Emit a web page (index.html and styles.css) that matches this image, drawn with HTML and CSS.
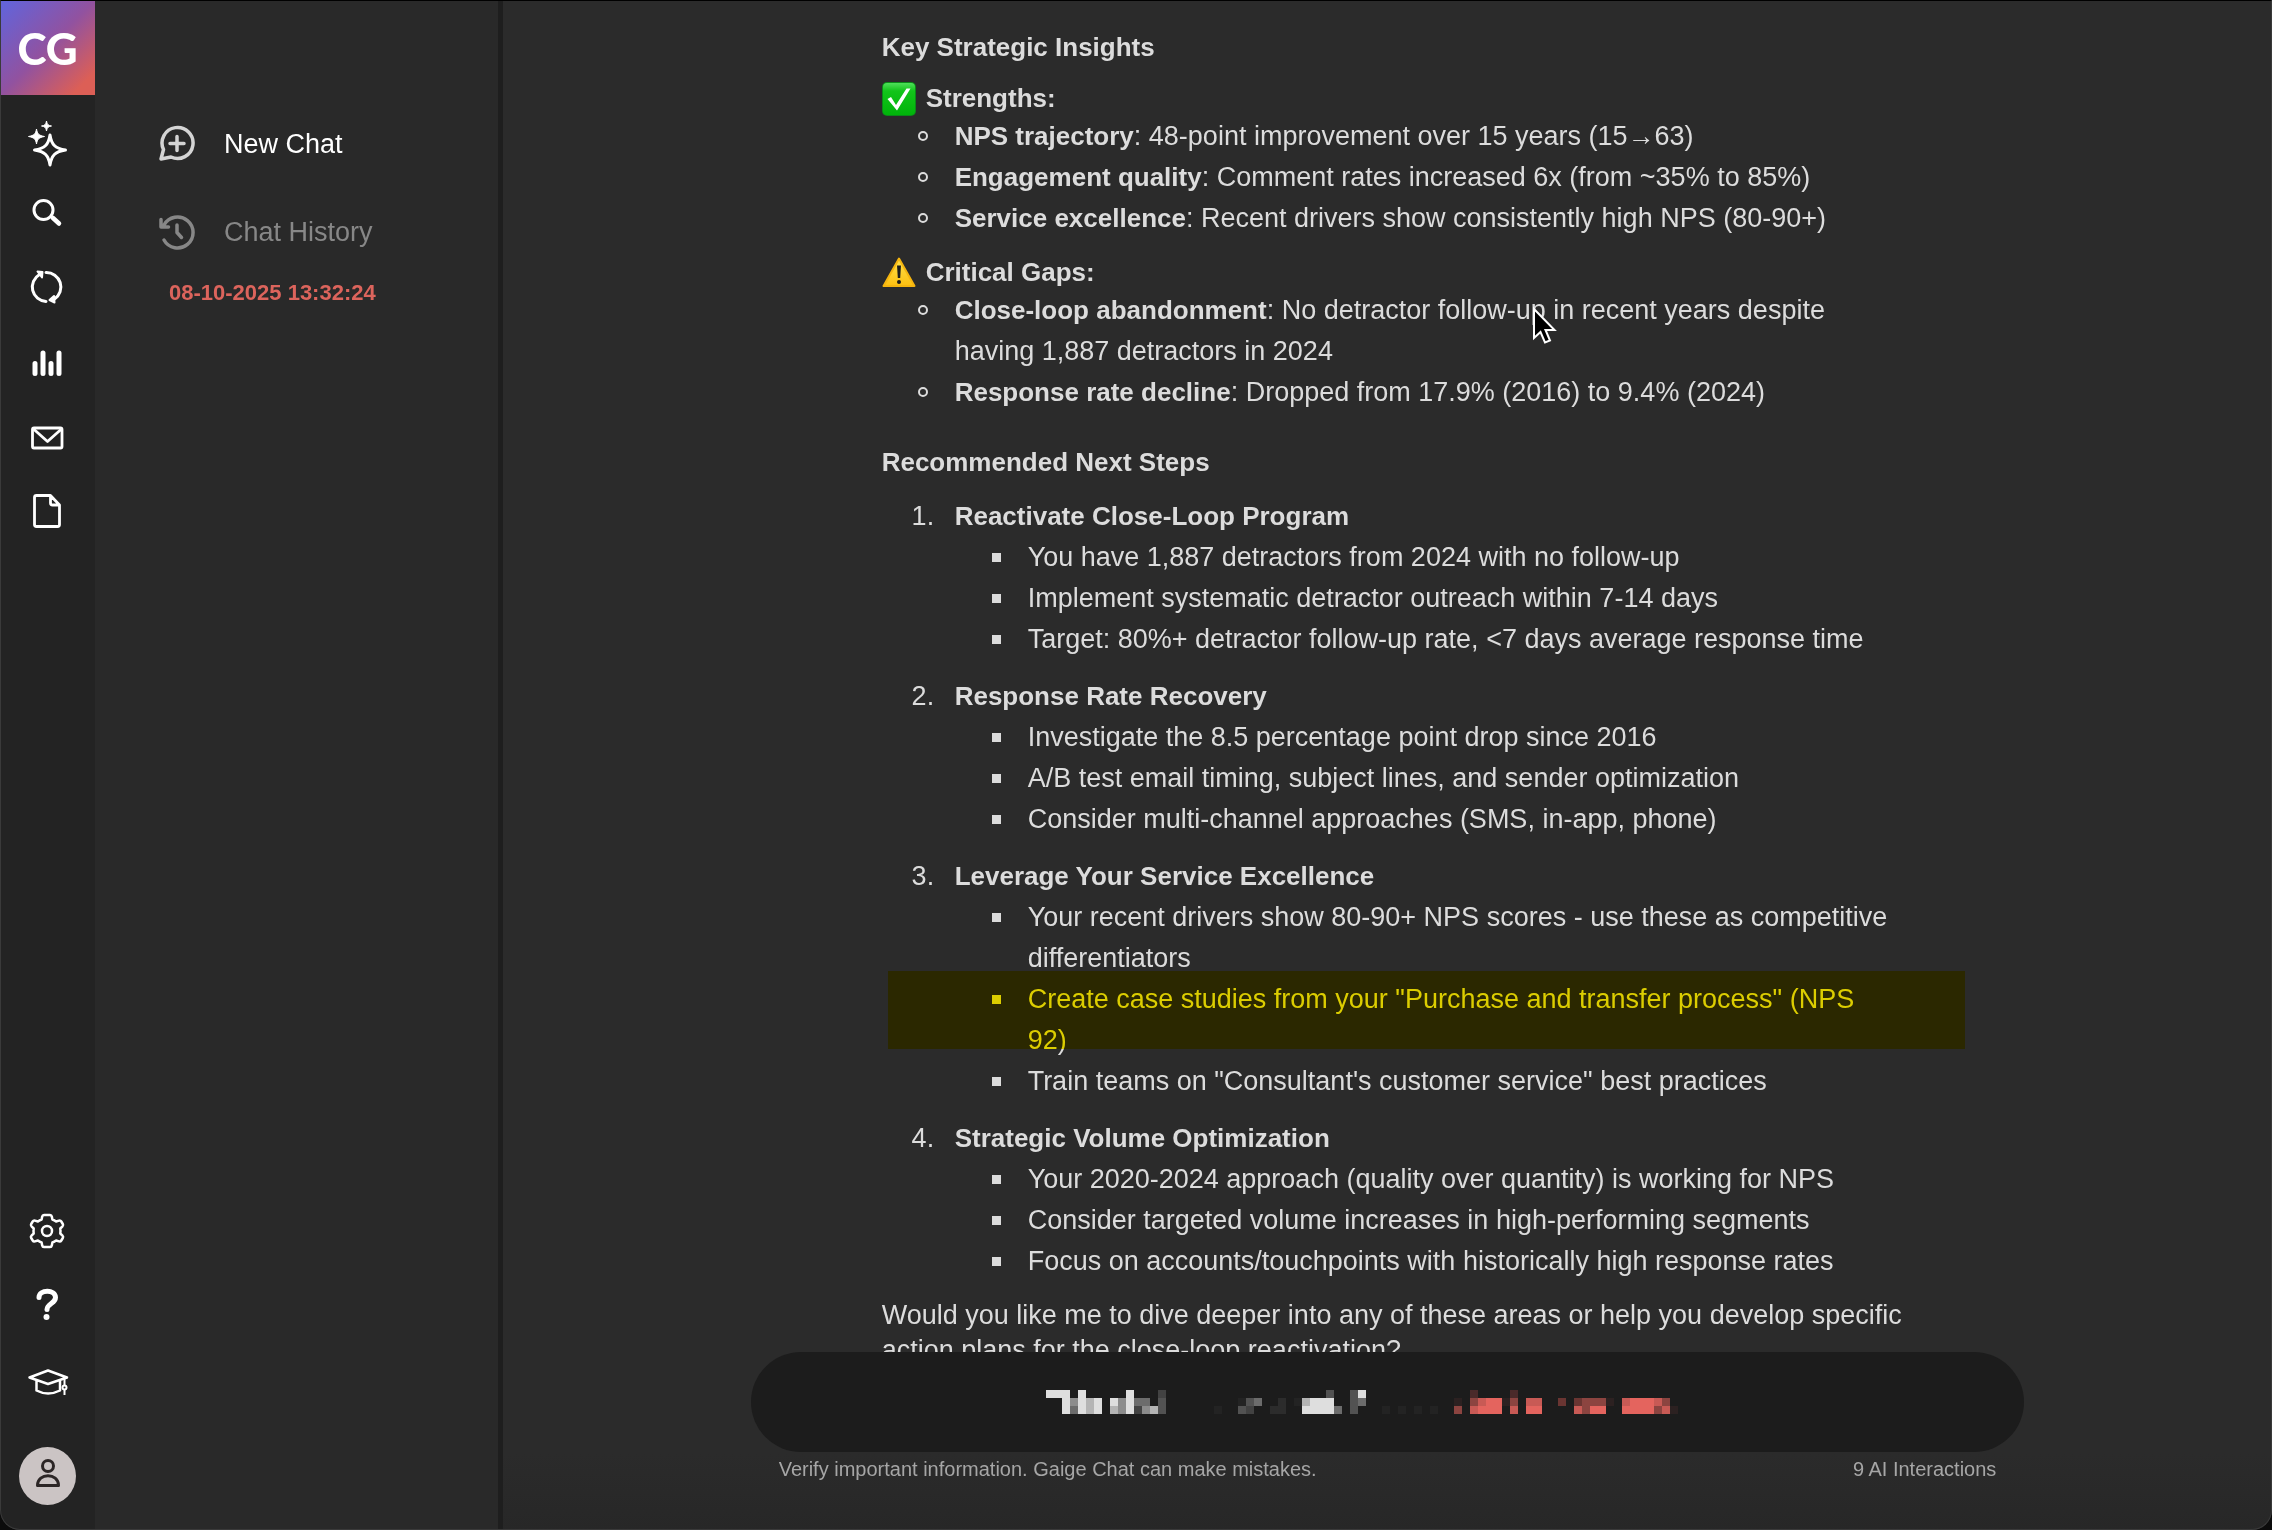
FILE: index.html
```html
<!DOCTYPE html>
<html lang="en">
<head>
  <meta charset="UTF-8" />
  <meta name="viewport" content="width=device-width, initial-scale=1.0" />
  <title>Gaige Chat</title>
  <link rel="stylesheet" href="styles.css">
</head>
<body>
  <div class="app">
    <nav class="rail" aria-label="Main">
      <a class="logo" href="#">CG</a>
      <div class="rail-group">
        <button class="rail-btn" aria-label="AI chat">
          <svg viewBox="0 0 59 60" fill="none" stroke="currentColor" stroke-width="3" stroke-linejoin="round">
            <path d="M32 26c1.500 9.500 5 13.500 15.500 15-10.500 1.500-14 5.500-15.500 15-1.500-9.500-5-13.500-15.500-15 10.500-1.500 14-5.500 15.500-15z"/>
            <path fill="currentColor" stroke-width="1" d="M18.500 20c.8 5 2.500 6.500 8 7.500-5.500 1-7.200 2.500-8 7.500-.8-5-2.500-6.500-8-7.500 5.500-1 7.200-2.500 8-7.500zM28.500 12c.6 3.500 1.500 4.500 5 5-3.500.6-4.400 1.500-5 5-.6-3.500-1.500-4.400-5-5 3.500-.5 4.400-1.500 5-5z"/>
          </svg>
        </button>
        <button class="rail-btn" aria-label="Search">
          <svg viewBox="0 0 59 60" fill="none" stroke="currentColor" stroke-width="3" stroke-linecap="round">
            <circle cx="25.500" cy="27" r="9.500"/>
            <path d="M33 33.500l2 2"/>
            <path stroke-width="4.500" d="M35 35l6 5.500"/>
          </svg>
        </button>
        <button class="rail-btn" aria-label="Refresh">
          <svg viewBox="0 0 59 60" fill="none" stroke="currentColor" stroke-width="3" stroke-linecap="round">
            <path d="M28 15.500a14.500 14.500 0 0 1 8.500 26.500M28 44.500a14.500 14.500 0 0 1-6.500-27"/>
            <path fill="currentColor" stroke-width="2" stroke-linejoin="round" d="M19.500 14.500l5 .5-.5 5.500zM36.500 45.500l-5-2.500 4.500-4z"/>
          </svg>
        </button>
        <button class="rail-btn" aria-label="Reports">
          <svg viewBox="0 0 59 60" fill="none" stroke="currentColor" stroke-width="5" stroke-linecap="round">
            <path d="M17 32.500v10M25 22v20.500M33 32.500v10M41 22v20.500"/>
          </svg>
        </button>
        <button class="rail-btn" aria-label="Messages">
          <svg viewBox="0 0 59 60" fill="none" stroke="currentColor" stroke-width="2.800" stroke-linejoin="round">
            <rect x="14.500" y="23" width="29.500" height="20" rx="1.500"/>
            <path d="M15.500 24L29.500 36.500l14-12.500"/>
          </svg>
        </button>
        <button class="rail-btn" aria-label="Documents">
          <svg viewBox="0 0 59 60" fill="none" stroke="currentColor" stroke-width="2.800" stroke-linejoin="round">
            <path d="M18.500 16.500h14l9 9.500v19.500a2 2 0 0 1-2 2h-21a2 2 0 0 1-2-2v-27a2 2 0 0 1 2-2zM32.500 16.500v7.500a2 2 0 0 0 2 2h7"/>
          </svg>
        </button>
      </div>
      <div class="rail-group rail-bottom">
        <button class="rail-btn" aria-label="Settings">
          <svg viewBox="0 0 59 60" fill="none" stroke="currentColor" stroke-width="2.500" stroke-linejoin="round">
            <path d="M26 14h6q1.500 0 1.800 1.500l.6 3q2 .8 3.700 2l2.900-.9q1.500-.4 2.300.9l1.500 2.500q.8 1.300-.3 2.400l-2.200 2.100q.4 2.500 0 5l2.200 2.100q1.100 1.100.3 2.400l-1.500 2.500q-.8 1.300-2.300.9l-2.900-.9q-1.700 1.300-3.700 2l-.6 3q-.3 1.500-1.800 1.500h-6q-1.500 0-1.800-1.500l-.6-3q-2-.7-3.700-2l-2.900.9q-1.500.4-2.300-.9l-1.500-2.500q-.8-1.300.3-2.400l2.200-2.100q-.4-2.500 0-5l-2.200-2.100q-1.100-1.100-.3-2.400l1.500-2.500q.8-1.300 2.300-.9l2.900.9q1.700-1.200 3.700-2l.6-3q.3-1.500 1.800-1.500z"/>
            <circle cx="29" cy="30" r="5"/>
          </svg>
        </button>
        <button class="rail-btn" aria-label="Help">
          <svg viewBox="0 0 59 60" fill="none" stroke="currentColor" stroke-width="5" stroke-linecap="round">
            <path d="M21 22.500c0-8 16.500-8.500 16.500 0 0 6-8.500 6-8.500 12"/>
            <circle cx="28.500" cy="42" r="3" fill="currentColor" stroke="none"/>
          </svg>
        </button>
        <button class="rail-btn" aria-label="Learning">
          <svg viewBox="0 0 59 60" fill="none" stroke="currentColor" stroke-width="2.500" stroke-linejoin="round">
            <path d="M11.500 28.500l18.500-7 19 7-19 6.500zM18.500 31v10.500q11.500 6 23.500 0V31"/>
            <path stroke-width="2" d="M46.500 30v6.500M46.500 40.500V46"/>
            <circle cx="46.500" cy="38.500" r="2" stroke-width="2"/>
          </svg>
        </button>
      </div>
      <button class="avatar" aria-label="Account">
        <svg viewBox="0 0 28 30" fill="none" stroke="currentColor" stroke-width="3">
          <circle cx="14" cy="8" r="5.500"/>
          <path stroke-linejoin="round" d="M3.500 27.500c0-13 21-13 21 0z"/>
        </svg>
      </button>
    </nav>

    <aside class="panel">
      <button class="panel-item">
        <svg viewBox="0 0 38 38" fill="none" stroke="currentColor" stroke-width="3.500" stroke-linecap="round" stroke-linejoin="round">
          <path d="M3 34l2.500-9.500a15.500 15.500 0 1 1 7.500 7.500zM19 11.500v14M12 18.500h14"/>
        </svg>
        <span>New Chat</span>
      </button>
      <button class="panel-item muted">
        <svg viewBox="0 0 38 38" fill="none" stroke="currentColor" stroke-width="3.500" stroke-linecap="round" stroke-linejoin="round">
          <path d="M6 12a15.500 15.500 0 1 1 0 15M3 6.500v7.500h7.500M19 12v7.500l4.500 5"/>
        </svg>
        <span>Chat History</span>
      </button>
      <a class="history-link" href="#">08-10-2025 13:32:24</a>
    </aside>

    <main class="chat">
      <div class="messages">
        <article class="message">
          <h2>Key Strategic Insights</h2>
          <h3>
            <svg class="emoji" viewBox="0 0 34 34" role="img" aria-label="Done">
              <defs>
                <linearGradient id="green" x1="0" y1="0" x2="0" y2="1">
                  <stop offset="0" stop-color="#4fe05a"/>
                  <stop offset=".25" stop-color="#12c41a"/>
                  <stop offset="1" stop-color="#00b40a"/>
                </linearGradient>
              </defs>
              <rect width="34" height="34" rx="5" fill="#0a8a18"/>
              <rect x="1" y="1" width="32" height="32" rx="4" fill="url(#green)"/>
              <path d="M5.500 17l3.500-2 5 8L24.500 6.500h4L15 28.500z" fill="#fff"/>
            </svg>
            Strengths:
          </h3>
          <ul class="points">
            <li><strong>NPS trajectory</strong>: 48-point improvement over 15 years (15→63)</li>
            <li><strong>Engagement quality</strong>: Comment rates increased 6x (from ~35% to 85%)</li>
            <li><strong>Service excellence</strong>: Recent drivers show consistently high NPS (80-90+)</li>
          </ul>
          <h3>
            <svg class="emoji" viewBox="0 0 34 34" role="img" aria-label="Warning">
              <defs>
                <linearGradient id="amber" x1="0" y1="0" x2="0" y2="1">
                  <stop offset="0" stop-color="#ffe04d"/>
                  <stop offset="1" stop-color="#fdc010"/>
                </linearGradient>
              </defs>
              <path d="M17 2.500L32.500 30h-31z" fill="url(#amber)" stroke="#f5b50f" stroke-width="2" stroke-linejoin="round"/>
              <path d="M15 9.500h4l-.8 12.500h-2.400z" fill="#1c1c1c"/>
              <circle cx="17" cy="26" r="2" fill="#1c1c1c"/>
            </svg>
            Critical Gaps:
          </h3>
          <ul class="points">
            <li><strong>Close-loop abandonment</strong>: No detractor follow-up in recent years despite having 1,887 detractors in 2024</li>
            <li><strong>Response rate decline</strong>: Dropped from 17.9% (2016) to 9.4% (2024)</li>
          </ul>

          <h2 class="section">Recommended Next Steps</h2>
          <ol class="steps">
            <li>
              <strong>Reactivate Close-Loop Program</strong>
              <ul>
                <li>You have 1,887 detractors from 2024 with no follow-up</li>
                <li>Implement systematic detractor outreach within 7-14 days</li>
                <li>Target: 80%+ detractor follow-up rate, &lt;7 days average response time</li>
              </ul>
            </li>
            <li>
              <strong>Response Rate Recovery</strong>
              <ul>
                <li>Investigate the 8.5 percentage point drop since 2016</li>
                <li>A/B test email timing, subject lines, and sender optimization</li>
                <li>Consider multi-channel approaches (SMS, in-app, phone)</li>
              </ul>
            </li>
            <li>
              <strong>Leverage Your Service Excellence</strong>
              <ul>
                <li>Your recent drivers show 80-90+ NPS scores - use these as competitive differentiators</li>
                <li class="marked">Create case studies from your "Purchase and transfer process" (NPS 92)</li>
                <li>Train teams on "Consultant's customer service" best practices</li>
              </ul>
            </li>
            <li>
              <strong>Strategic Volume Optimization</strong>
              <ul>
                <li>Your 2020-2024 approach (quality over quantity) is working for NPS</li>
                <li>Consider targeted volume increases in high-performing segments</li>
                <li>Focus on accounts/touchpoints with historically high response rates</li>
              </ul>
            </li>
          </ol>
          <p>Would you like me to dive deeper into any of these areas or help you develop specific action plans for the close-loop reactivation?</p>
        </article>
      </div>

      <div class="composer">
        <!-- obscured status line, one unit per block -->
        <svg class="mosaic" viewBox="0 0 79 3" shape-rendering="crispEdges" aria-hidden="true">
          <path fill="#dedede" d="M0 0h3v3h-1v-2h-2zM4 0h1v3h-1zM6 1h1v2h-1zM8 1h1v1h-1zM10 0h1v3h-1zM33 1h3v1h-3zM32 2h4v1h-4zM39 0h1v1h-1z"/>
          <path fill="#b4b4b4" d="M5 1h1v2h-1zM13 2h1v1h-1zM32 1h1v1h-1zM8 2h1v1h-1z"/>
          <path fill="#8c8c8c" d="M3 1h1v1h-1zM9 1h1v2h-1zM12 2h1v1h-1z"/>
          <path fill="#6c6c6c" d="M3 2h1v1h-1zM11 1h2v1h-2zM26 1h1v1h-1zM36 2h1v1h-1zM39 1h1v1h-1z"/>
          <path fill="#525252" d="M14 1h1v2h-1zM25 1h1v1h-1zM24 2h1v1h-1zM35 0h1v1h-1zM38 0h1v3h-1z"/>
          <path fill="#424242" d="M14 0h1v1h-1zM11 2h1v1h-1zM25 2h1v1h-1z"/>
          <path fill="#2c2c2c" d="M29 1h1v1h-1zM28 2h2v1h-2z"/>
          <path fill="#232323" d="M21 2h1v1h-1zM24 1h1v1h-1zM31 1h1v1h-1zM42 2h1v1h-1zM44 2h1v1h-1zM46 2h1v1h-1zM48 2h1v1h-1z"/>
          <path fill="#e4645e" d="M55 1h2v1h-2zM54 2h3v1h-3zM60 2h2v1h-2zM68 2h2v1h-2zM73 1h3v1h-3zM72 2h4v1h-4z"/>
          <path fill="#c85a55" d="M54 1h1v1h-1zM53 2h1v1h-1zM58 2h1v1h-1zM60 1h2v1h-2zM66 2h1v1h-1zM72 1h1v1h-1zM76 1h1v1h-1zM77 2h1v1h-1z"/>
          <path fill="#8c4440" d="M51 2h1v1h-1zM53 1h1v1h-1zM58 1h1v1h-1zM67 1h3v1h-3zM67 2h1v1h-1zM77 1h1v1h-1zM76 2h1v1h-1z"/>
          <path fill="#6a3532" d="M64 1h1v1h-1zM66 1h1v1h-1z"/>
          <path fill="#4a2a2a" d="M53 0h1v1h-1zM58 0h1v1h-1z"/>
          <path fill="#2c2121" d="M51 1h1v1h-1zM57 1h1v1h-1zM70 1h1v1h-1zM78 2h1v1h-1z"/>
        </svg>
      </div>
      <footer class="notes">
        <span>Verify important information. Gaige Chat can make mistakes.</span>
        <span>9 AI Interactions</span>
      </footer>
    </main>

    <svg class="cursor" viewBox="0 0 26 40" aria-hidden="true">
      <path d="M2 4v29l6.500-6 4.500 10.500 5-2-4.500-10.500h9z" fill="#000" stroke="#fff" stroke-width="2" stroke-linejoin="miter"/>
    </svg>
  </div>
</body>
</html>
```
FILE: styles.css
```css
* {
  box-sizing: border-box;
}
body {
  margin: 0;
  background: #0c0c0c;
  color: #dcdcdc;
  font-family: "Liberation Sans", Arial, Helvetica, sans-serif;
  font-size: 27px;
}
button {
  padding: 0;
  border: none;
  background: none;
  color: inherit;
  font: inherit;
  text-align: left;
  cursor: pointer;
}
.app {
  position: relative;
  display: flex;
  height: 100vh;
  overflow: hidden;
  border-radius: 0 0 20px 20px;
  background: #2b2b2b;
}
/* thin window frame drawn over everything */
.app::after {
  content: "";
  position: absolute;
  inset: 0;
  border: 1px solid #3a3a3a;
  border-top-color: #000;
  border-radius: 0 0 20px 20px;
  pointer-events: none;
}

/* icon rail */
.rail {
  display: flex;
  flex-direction: column;
  align-items: center;
  flex: 0 0 95px;
  padding-bottom: 25px;
  background: #232323;
  color: #fff;
}
.logo {
  display: flex;
  align-items: center;
  justify-content: center;
  width: 95px;
  height: 95px;
  margin-bottom: 7px;
  background: linear-gradient(135deg, #6463d8 5%, #9152a0 50%, #dc5f56 88%);
  color: #fff;
  font-family: Lato, sans-serif;
  font-size: 44px;
  font-weight: 900;
  text-decoration: none;
}
.rail-group {
  display: flex;
  flex-direction: column;
}
.rail-bottom {
  margin-top: auto;
  margin-bottom: 31px;
}
.rail-btn {
  display: flex;
  align-items: center;
  justify-content: center;
  width: 95px;
  height: 74px;
}
.rail-btn svg {
  width: 59px;
  height: 60px;
}
.avatar {
  display: flex;
  justify-content: center;
  width: 57px;
  height: 58px;
  padding-top: 11px;
  border-radius: 50%;
  background: #cbc4c4;
  color: #2c2626;
}
.avatar svg {
  width: 28px;
  height: 30px;
}

/* chat list */
.panel {
  display: flex;
  flex-direction: column;
  align-items: flex-start;
  flex: 0 0 408px;
  padding: 100px 0 0 63px;
  border-right: 5px solid #1e1e1e;
  background: #292929;
}
.panel-item {
  display: flex;
  align-items: center;
  gap: 28px;
  height: 88px;
  color: #fff;
}
.panel-item svg {
  width: 38px;
  height: 38px;
  color: #d4d4d4;
}
.panel-item.muted,
.panel-item.muted svg {
  color: #878787;
}
.history-link {
  margin: 5px 0 0 11px;
  color: #dc645c;
  font-size: 22px;
  font-weight: bold;
  line-height: 24px;
  text-decoration: none;
}

/* conversation */
.chat {
  display: flex;
  flex-direction: column;
  align-items: center;
  flex: 1;
  min-width: 0;
  background: linear-gradient(#2b2b2b 95%, #272727);
}
.messages {
  flex: 1;
  width: 59%;
  min-height: 0;
  padding: 0 4px 0 16px;
}
.message {
  padding-top: 30px;
  line-height: 35px;
}
h2,
h3,
strong {
  font-size: 26px;
}
h2 {
  margin: 0 0 16px;
}
h3 {
  display: flex;
  align-items: center;
  gap: 10px;
  margin: 0;
}
.emoji {
  width: 34px;
  height: 34px;
}
.section {
  margin-top: 32px;
}
ul,
ol {
  margin: 0;
  padding-left: 57px;
  line-height: 41px;
}
li {
  padding-left: 16px;
}
ul {
  list-style: none;
}
ul li::before {
  content: "";
  display: inline-block;
  width: 9px;
  height: 9px;
  margin: 0 27px 0 -36px;
  background: currentColor;
  vertical-align: 4px;
}
.points {
  margin-bottom: 16px;
}
.points li::before {
  width: 6px;
  height: 6px;
  margin-left: -37px;
  border: 2px solid currentColor;
  border-radius: 50%;
  background: none;
}
.steps {
  padding-right: 12px;
  padding-left: 60px;
}
.steps > li {
  margin-bottom: 16px;
  padding-left: 13px;
}
.marked {
  position: relative;
}
/* highlighter band tints the text under it */
.marked::after {
  content: "";
  position: absolute;
  top: -8px;
  right: -72px;
  bottom: 12px;
  left: -124px;
  background: #ffee00;
  mix-blend-mode: multiply;
}
.message p {
  margin: 0;
}
.composer {
  position: relative;
  display: flex;
  align-items: center;
  justify-content: center;
  flex: 0 0 100px;
  width: 72%;
  padding-right: 50px;
  border-radius: 50px;
  background: #1c1c1c;
}
.mosaic {
  width: 632px;
  height: 24px;
}
.notes {
  display: flex;
  justify-content: space-between;
  flex: 0 0 78px;
  width: 72%;
  padding: 5px 28px 0;
  color: #a6a6a6;
  font-size: 20px;
  line-height: 24px;
}
.cursor {
  position: absolute;
  top: 305px;
  left: 1532px;
  width: 26px;
  height: 40px;
}
```
